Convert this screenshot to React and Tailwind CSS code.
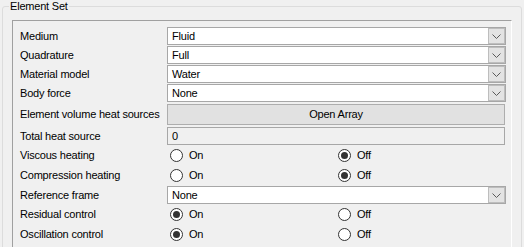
import React from 'react';

const font = { fontFamily: '"Liberation Sans", Arial, sans-serif' };

const Chevron = () => (
  <svg width="9" height="5" viewBox="0 0 9 5" className="block">
    <path d="M0.5 0.5 L4.5 4.5 L8.5 0.5" fill="none" stroke="#5a5a5a" strokeWidth="1" />
  </svg>
);

const Combo = ({ value }) => (
  <div className="flex h-full w-[339px] border border-[#a7a7a7] bg-white">
    <div className="flex-1 pl-[4px] flex items-center">{value}</div>
    <div className="w-[17px] h-full bg-[#e3e3e3] border border-[#bdbdbd] flex items-center justify-center">
      <Chevron />
    </div>
  </div>
);

const Radio = ({ checked, label }) => (
  <div className="flex items-center ml-[3px]">
    <div className="w-[13px] h-[13px] rounded-full border border-[#333] bg-white flex items-center justify-center">
      {checked && <div className="w-[7px] h-[7px] rounded-full bg-[#333]" />}
    </div>
    <span className="ml-[6px]">{label}</span>
  </div>
);

const Row = ({ label, h, className = '', children }) => (
  <div className={`flex items-center ${h} ${className}`}>
    <div className="w-[147px] whitespace-nowrap">{label}</div>
    {children}
  </div>
);

const RadioPair = ({ on }) => (
  <div className="grid grid-cols-[168px_168px] h-full items-center">
    <Radio checked={on} label="On" />
    <Radio checked={!on} label="Off" />
  </div>
);

export default function App() {
  return (
    <div
      className="w-[524px] h-[247px] bg-[#f0f0f0] overflow-hidden text-[11px] tracking-[-0.2px] text-black"
      style={font}
    >
      <div className="relative mt-[6px] ml-[2px] w-[520px] h-[260px] border border-[#dcdcdc] rounded-[3px]">
        <div className="absolute -top-[7px] left-[6px] px-[1px] bg-[#f0f0f0] leading-[13px]">Element Set</div>
        <div className="ml-[9px] mt-[13px] w-[500px] h-[240px] border-t border-l border-t-[#a0a0a0] border-l-[#a0a0a0] border-r border-r-white pl-[7px] pt-[6px]">
          <Row label="Medium" h="h-[18px]">
            <Combo value="Fluid" />
          </Row>
          <Row label="Quadrature" h="h-[18px]" className="mt-[1px]">
            <Combo value="Full" />
          </Row>
          <Row label="Material model" h="h-[18px]" className="mt-[1px]">
            <Combo value="Water" />
          </Row>
          <Row label="Body force" h="h-[18px]" className="mt-[1px]">
            <Combo value="None" />
          </Row>
          <Row label="Element volume heat sources" h="h-[21px]" className="mt-[2px]">
            <button className="w-[338px] h-full bg-[#e1e1e1] border border-[#adadad] flex items-center justify-center">
              Open Array
            </button>
          </Row>
          <Row label="Total heat source" h="h-[18px]" className="mt-[2px]">
            <div className="w-[338px] h-full bg-[#f0f0f0] border border-[#a7a7a7] pl-[4px] flex items-center">0</div>
          </Row>
          <Row label="Viscous heating" h="h-[20px]">
            <RadioPair on={false} />
          </Row>
          <Row label="Compression heating" h="h-[20px]">
            <RadioPair on={false} />
          </Row>
          <Row label="Reference frame" h="h-[18px]" className="mt-[1px]">
            <Combo value="None" />
          </Row>
          <Row label="Residual control" h="h-[20px]">
            <RadioPair on={true} />
          </Row>
          <Row label="Oscillation control" h="h-[20px]">
            <RadioPair on={true} />
          </Row>
        </div>
      </div>
    </div>
  );
}
